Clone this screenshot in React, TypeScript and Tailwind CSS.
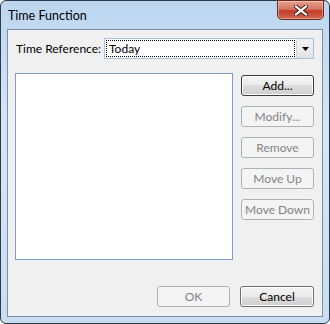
import React from "react"

const font = { fontFamily: 'Lato, "Noto Sans", sans-serif' }

function WinButton({
  label,
  disabled,
  isDefault,
  className = "",
}: {
  label: string
  disabled?: boolean
  isDefault?: boolean
  className?: string
}) {
  if (disabled) {
    return (
      <div
        className={`flex h-[21px] items-center justify-center whitespace-nowrap rounded-[3px] border border-[#adb2b5] bg-[#f4f4f4] text-[12px] text-[#838383] ${className}`}
      >
        {label}
      </div>
    )
  }
  return (
    <div
      className={`flex h-[21px] items-center justify-center whitespace-nowrap rounded-[3px] border bg-[linear-gradient(#f2f2f2_0%,#ebebeb_50%,#dddddd_50%,#cfcfcf_100%)] text-[12px] text-black shadow-[inset_0_0_0_1px_#fcfcfc] ${
        isDefault ? "border-[#3c3c3c]" : "border-[#707070]"
      } ${className}`}
    >
      {label}
    </div>
  )
}

export default function App() {
  return (
    <div
      className="flex h-[324px] w-[330px] flex-col rounded-[6px] border border-[#2e3b48] bg-[linear-gradient(#bcd6f0,#d6e6f6_40%,#c9ddf2)]"
      style={font}
    >
      {/* Title bar */}
      <div className="flex h-[28px] shrink-0 items-start">
        <span className="ml-[7px] mt-[7px] whitespace-nowrap text-[12.5px] leading-[16px] text-black">
          Time Function
        </span>
        <div className="-mt-[1px] ml-auto mr-[5px] flex h-[20px] w-[47px] items-center justify-center rounded-b-[5px] border border-[#6d2a21] bg-[linear-gradient(#e8a08e,#d57563_45%,#c33a24_55%,#d46a52)] shadow-[inset_0_0_0_1px_rgba(255,255,255,0.35)]">
          <svg width="14" height="11" viewBox="0 0 14 11">
            <path
              d="M2 1.5 L12 9.5 M12 1.5 L2 9.5"
              stroke="#3b1a14"
              strokeWidth="4"
              strokeLinecap="square"
            />
            <path
              d="M2 1.5 L12 9.5 M12 1.5 L2 9.5"
              stroke="#ffffff"
              strokeWidth="2.2"
              strokeLinecap="square"
            />
          </svg>
        </div>
      </div>

      {/* Client area */}
      <div className="mx-[6px] mb-[6px] flex flex-1 flex-col border border-[#7b8ea3] bg-[#f0f0f0] pl-[7px] pr-[8px] pt-[8px] pb-[9px]">
        <div className="flex h-[21px] items-center">
          <span className="ml-[1px] whitespace-nowrap text-[12px] text-black">Time Reference:</span>
          <div className="ml-auto flex h-[21px] w-[210px] border border-[#a4c2e0] bg-white">
            <div className="m-[1px] flex flex-1 items-center border border-dotted border-black pl-[2px] text-[12px] text-black">
              Today
            </div>
            <div className="flex w-[17px] items-center justify-center border-l border-[#c3d6ea] bg-[linear-gradient(#f2f2f2,#e3e3e3)]">
              <svg width="7" height="4" viewBox="0 0 7 4">
                <path d="M0 0 H7 L3.5 4 Z" fill="#000" />
              </svg>
            </div>
          </div>
        </div>

        <div className="mt-[14px] flex">
          <div className="h-[187px] w-[218px] border border-[#7a9fd0] bg-white" />
          <div className="ml-auto flex w-[73px] flex-col gap-[10px] pt-[2px]">
            <WinButton label="Add..." isDefault />
            <WinButton label="Modify..." disabled />
            <WinButton label="Remove" disabled />
            <WinButton label="Move Up" disabled />
            <WinButton label="Move Down" disabled />
          </div>
        </div>

        <div className="mt-auto flex justify-end gap-[10px]">
          <WinButton label="OK" disabled className="w-[73px]" />
          <WinButton label="Cancel" className="w-[74px]" />
        </div>
      </div>
    </div>
  )
}
